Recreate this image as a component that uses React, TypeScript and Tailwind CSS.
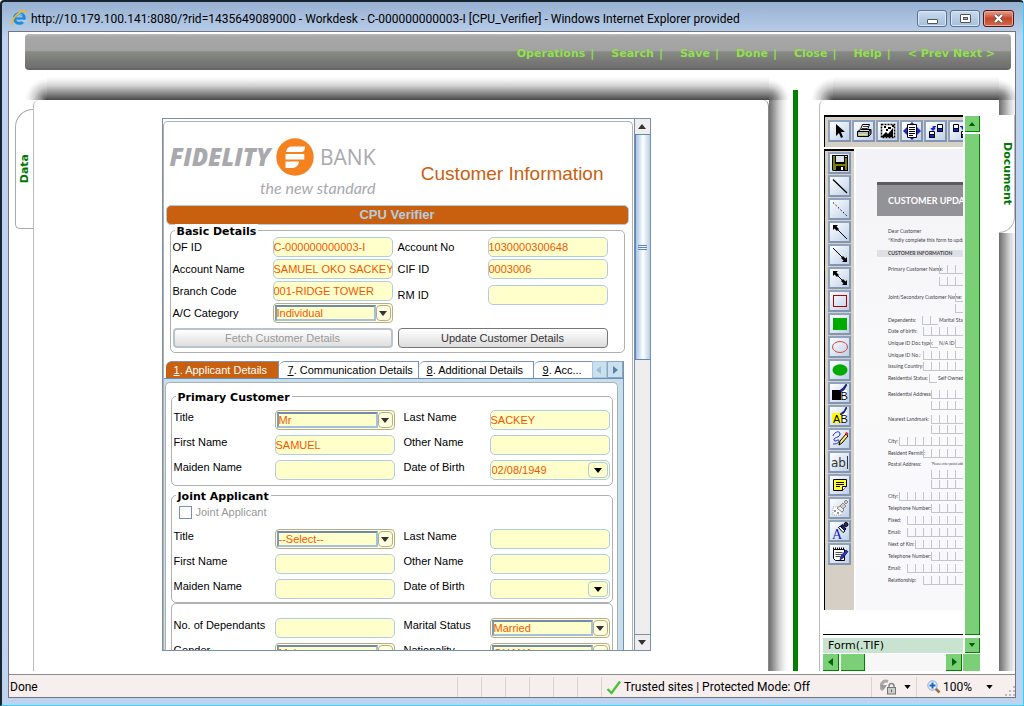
import React from "react";

const VERDANA = "font-['DejaVu_Sans',sans-serif]";

/* ---------- small glyphs ---------- */

function Tri({ dir, className }: { dir: "up" | "down" | "left" | "right"; className?: string }) {
  const pts = {
    up: "0,5 4,0 8,5",
    down: "0,0 8,0 4,5",
    left: "6,0 6,8 1,4",
    right: "2,0 2,8 7,4",
  }[dir];
  return (
    <svg viewBox={dir === "up" || dir === "down" ? "0 0 8 5" : "0 0 8 8"} className={className ?? "h-[5px] w-2"} fill="currentColor" aria-hidden="true">
      <polygon points={pts} />
    </svg>
  );
}

function IeLogo() {
  return (
    <svg viewBox="0 0 16 16" className="h-4 w-4 shrink-0" aria-hidden="true">
      <circle cx="8.4" cy="8.4" r="4.9" fill="none" stroke="#1c8be0" strokeWidth="3" />
      <rect x="5" y="7.4" width="9" height="2.2" fill="#1c8be0" />
      <path d="M10 9.8h6v2.6h-4z" fill="#b5cce7" />
      <path d="M5.5 5.4c1.5-2 4.6-2 5.8 0" fill="none" stroke="#8fdcff" strokeWidth="1" />
      <path d="M1.5 15.2C-.8 12.5 4 5 9 2.2c3-1.7 6-2 5.8.6" fill="none" stroke="#f2b81c" strokeWidth="1.7" />
    </svg>
  );
}

/* ---------- form controls ---------- */

function TextField({ label, value = "" }: { label: string; value?: string }) {
  return (
    <input
      aria-label={label}
      defaultValue={value}
      className="h-5 w-[120px] rounded-[5px] border border-[#b0cbe6] bg-[#ffffcc] text-[11px] leading-4 text-[#f05800] outline-none"
    />
  );
}

function SelectField({ label, value }: { label: string; value: string }) {
  return (
    <div className="flex h-5 w-[120px] items-stretch rounded-[4px] border border-[#b4af88] bg-[#ffffe0] p-px">
      <select
        aria-label={label}
        defaultValue={value}
        className="min-w-0 flex-1 appearance-none border-2 border-[#a3c0de] border-t-[#7189ab] border-l-[#7d9abd] bg-[#ffffcc] text-[11px] leading-3 text-[#f05800] outline-none"
      >
        <option>{value}</option>
      </select>
      <span className="pointer-events-none flex w-[15px] items-center justify-center rounded-[4px] border border-[#b4af88] bg-[#ffffdd] text-[#333]">
        <Tri dir="down" className="h-[5px] w-[10px]" />
      </span>
    </div>
  );
}

function DateField({ label, value = "" }: { label: string; value?: string }) {
  return (
    <div className="flex h-5 w-[120px] items-center rounded-[5px] border border-[#b0cbe6] bg-[#ffffcc] pr-px">
      <input aria-label={label} defaultValue={value} className="min-w-0 flex-1 bg-transparent px-px text-[11px] leading-4 text-[#f05800] outline-none" />
      <button aria-label={"Pick " + label} className="flex h-4 w-5 items-center justify-center rounded-[4px] border border-[#b0cbe6] text-black">
        <Tri dir="down" className="h-[7px] w-2" />
      </button>
    </div>
  );
}

type Cell = { label: string; kind?: "text" | "select" | "date"; value?: string };

function Control({ cell }: { cell: Cell }) {
  if (cell.kind === "select") return <SelectField label={cell.label} value={cell.value ?? ""} />;
  if (cell.kind === "date") return <DateField label={cell.label} value={cell.value} />;
  return <TextField label={cell.label} value={cell.value} />;
}

function FieldRows({ rows }: { rows: [Cell, Cell][] }) {
  return (
    <div className="grid gap-y-[5px]">
      {rows.map(([a, b], i) => (
        <div key={i} className="grid grid-cols-[101px_129px_86px_120px] text-[11px] leading-[14px]">
          <span>{a.label}</span>
          <Control cell={a} />
          <span>{b.label}</span>
          <Control cell={b} />
        </div>
      ))}
    </div>
  );
}

function Group({ title, className, children }: { title: string; className: string; children: React.ReactNode }) {
  return (
    <section className={"relative rounded-[5px] border border-[#b0b0b0] " + className}>
      <h2 className={"absolute -top-[7px] left-1 bg-white px-[2px] text-[11px] leading-4 font-bold " + VERDANA}>{title}</h2>
      {children}
    </section>
  );
}

/* ---------- bank form ---------- */

function BankLogo() {
  return (
    <div className="w-[206px] text-[#a9a9ad]">
      <div className="flex items-center justify-between font-['Open_Sans',sans-serif] text-[22px] leading-[38px]">
        <span className="text-[24px] font-extrabold italic">FIDELITY</span>
        <svg viewBox="0 0 38 38" className="h-[38px] w-[38px]" aria-hidden="true">
          <circle cx="19" cy="19" r="18.7" fill="#f5821f" />
          <path d="M14.5 8.5H29c0 4-1.5 5.500-4 5.500H10c.5-3 2-5 4.500-5.500z" fill="#fff" />
          <path d="M9.500 16h18.800v5.500H9.500z" fill="#fff" />
          <path d="M9.500 23.500H23c-.5 4-3 6.500-7 6.500H9.500z" fill="#fff" />
        </svg>
        <span className="text-[21px] font-normal">BANK</span>
      </div>
      <div className="text-right font-['Lato',sans-serif] text-[16px] leading-6 italic">the new standard</div>
    </div>
  );
}

function BasicDetails() {
  const left: Cell[] = [
    { label: "OF ID", value: "C-000000000003-I" },
    { label: "Account Name", value: "SAMUEL OKO SACKEY" },
    { label: "Branch Code", value: "001-RIDGE TOWER" },
    { label: "A/C Category", kind: "select", value: "Individual" },
  ];
  const right: Cell[] = [
    { label: "Account No", value: "1030000300648" },
    { label: "CIF ID", value: "0003006" },
    { label: "RM ID" },
  ];
  return (
    <Group title="Basic Details" className="mt-[5px] mr-[7px] ml-[6px] px-[2px] pt-[6px] pb-1">
      <div className="grid grid-cols-[220px_210px] gap-x-[5px] text-[11px] leading-4">
        <div className="grid gap-y-[2px]">
          {left.map((c) => (
            <div key={c.label} className="flex items-center justify-between">
              <span>{c.label}</span>
              <Control cell={c} />
            </div>
          ))}
        </div>
        <div className="grid grid-rows-[20px_20px_28px] content-start gap-y-[2px]">
          {right.map((c) => (
            <div key={c.label} className="flex items-center justify-between">
              <span>{c.label}</span>
              <Control cell={c} />
            </div>
          ))}
        </div>
        <button disabled className="mt-[5px] h-5 rounded-[4px] border-2 border-[#b9c3cc] bg-linear-to-b from-white to-[#dedede] text-[11px] leading-4 text-[#999]">
          Fetch Customer Details
        </button>
        <button className="mt-[5px] h-5 rounded-[4px] border border-[#777] bg-linear-to-b from-white to-[#dcdcdc] text-[11px] leading-4 text-[#333]">
          Update Customer Details
        </button>
      </div>
    </Group>
  );
}

function FormTabs() {
  const tabs = [
    ["1", ". Applicant Details", "w-[113px] bg-[#c8600f] text-white pl-2"],
    ["7", ". Communication Details", "w-[140px] bg-white pl-[9px]"],
    ["8", ". Additional Details", "w-[115px] bg-white pl-2"],
    ["9", ". Acc...", "w-[58px] bg-white pl-[9px] border-r-0"],
  ];
  return (
    <div role="tablist" className="flex h-[18px] border-b border-[#6d8db5] pl-[2px]">
      {tabs.map(([n, rest, cls]) => (
        <button
          key={n}
          role="tab"
          aria-selected={n === "1"}
          className={"shrink-0 rounded-tl-[6px] border-t border-r border-[#7a94b8] text-left text-[11px] leading-[15px] whitespace-nowrap " + cls}
        >
          <span className="underline">{n}</span>
          {rest}
        </button>
      ))}
      <button aria-label="Scroll tabs left" className="flex w-4 items-center justify-center border border-[#a8c4dc] bg-[#c9e0ee] text-[#9dbdd8]">
        <Tri dir="left" className="h-2 w-2" />
      </button>
      <button aria-label="Scroll tabs right" className="flex w-4 items-center justify-center border border-[#8aa8c4] bg-[#c9e0ee] text-[#5a7fa8]">
        <Tri dir="right" className="h-2 w-2" />
      </button>
    </div>
  );
}

function BankForm() {
  return (
    <div className="flex min-h-0 flex-1 self-stretch overflow-hidden">
      <div className="mt-[2px] min-w-0 flex-1 rounded-t-[5px] border border-b-0 border-[#b0b0b0]">
        <div className="flex h-[83px] items-start justify-between pt-4 pr-7 pl-[6px]">
          <BankLogo />
          <h1 className="pt-5 text-[19px] leading-8 text-[#c8600f]">Customer Information</h1>
        </div>
        <div className="mr-[3px] ml-[2px] h-5 rounded-[5px] border border-[#b0cbe6] bg-[#c8600f] text-center text-[13px] leading-[18px] font-bold text-[#b5cce0]">
          CPU Verifier
        </div>
        <BasicDetails />
        <div className="mt-2 mr-2 border-r border-[#7a8fa8]">
          <FormTabs />
          <div className="bg-[#c6dfed] pt-[3px] pr-[5px] pl-px">
            <div className="rounded-t-[5px] border border-b-0 border-[#b0b0b0] bg-white pt-[13px] pr-1 pl-[5px]">
              <Group title="Primary Customer" className="px-[2px] pt-[13px] pb-[5px]">
                <FieldRows
                  rows={[
                    [{ label: "Title", kind: "select", value: "Mr" }, { label: "Last Name", value: "SACKEY" }],
                    [{ label: "First Name", value: "SAMUEL" }, { label: "Other Name" }],
                    [{ label: "Maiden Name" }, { label: "Date of Birth", kind: "date", value: "02/08/1949" }],
                  ]}
                />
              </Group>
              <Group title="Joint Applicant" className="mt-[9px] px-[2px] pt-[7px] pb-[3px]">
                <label className="mb-2 ml-[5px] flex h-[18px] items-center gap-1 text-[11px] leading-4 text-[#999]">
                  <input type="checkbox" className="h-[13px] w-[13px] appearance-none border border-[#7a8fb4] bg-white" />
                  Joint Applicant
                </label>
                <FieldRows
                  rows={[
                    [{ label: "Title", kind: "select", value: "--Select--" }, { label: "Last Name" }],
                    [{ label: "First Name" }, { label: "Other Name" }],
                    [{ label: "Maiden Name" }, { label: "Date of Birth", kind: "date" }],
                  ]}
                />
              </Group>
              <section className="rounded-[5px] border border-[#b0b0b0] px-[2px] pt-[14px] pb-8">
                <FieldRows
                  rows={[
                    [{ label: "No. of Dependants" }, { label: "Marital Status", kind: "select", value: "Married" }],
                    [{ label: "Gender", kind: "select", value: "Male" }, { label: "Nationality", kind: "select", value: "GHANA" }],
                  ]}
                />
              </section>
            </div>
          </div>
        </div>
      </div>
    </div>
  );
}

function FormWindow() {
  return (
    <div className="mx-auto flex h-full w-[489px] border border-[#7a8fa8] font-['Liberation_Sans',Arial,sans-serif] text-black">
      <BankForm />
      <div className="ml-px flex w-4 flex-col border-l border-[#7a8fa8] bg-[#eee]">
        <button aria-label="Scroll up" className="flex h-[15px] items-center justify-center text-[#333]">
          <Tri dir="up" />
        </button>
        <div className="flex h-[226px] flex-col items-center justify-center gap-px border border-r-0 border-[#5f86bd] bg-linear-to-r from-[#a9c5e6] via-white to-[#b5cfe5]">
          <i className="h-px w-[9px] bg-[#5f86bd]" />
          <i className="h-px w-[9px] bg-[#5f86bd]" />
          <i className="h-px w-[9px] bg-[#5f86bd]" />
        </div>
        <button aria-label="Scroll down" className="mt-auto flex h-4 items-center justify-center border-t border-[#7a8fa8] text-[#333]">
          <Tri dir="down" />
        </button>
      </div>
    </div>
  );
}

/* ---------- document viewer ---------- */

const arrowHead = <path d="M1 1h5L4.500 2.500 7 5 5 7 2.500 4.500 1 6z" />;

const topTools: [string, React.ReactNode][] = [
  ["Pointer", <path key="i" d="M4 1v12l3-3 2 5 2-1-2-5h4z" />],
  [
    "Print",
    <g key="i" stroke="#000" fill="#fff">
      <path d="M4.500 6.500l2-5h7l-2 5" />
      <path d="M7 3.500h5M6 5.500h5" strokeWidth=".8" />
      <path d="M1.500 8.500l3-2h10l-2 2z" fill="#ddd" />
      <path d="M1.500 8.500h11v5h-11z" fill="#bbb" />
      <path d="M12.500 8.500l2.500-2v4.500l-2.500 2.500z" fill="#777" />
      <path d="M3 11.500h7" stroke="#ee4" />
    </g>,
  ],
  [
    "Select zone",
    <g key="i">
      <path d="M1.500 1.500h13v13h-13z" fill="#fff" stroke="#000" strokeWidth="1.500" strokeDasharray="2 1" />
      <path d="M2 13l4-4 2 2 5-6v9H2z" />
      <path d="M4 3h2v2H4zM8 4h3v2H8zM12 2h2v2h-2zM6 6h2v2H6z" />
    </g>,
  ],
  [
    "Fit page",
    <g key="i">
      <path d="M8 -1l3 3H5zM8 17l3-3H5zM-1 8l4-4v8zM17 8l-4-4v8z" fill="#22c" />
      <path d="M3.500 1.500h9v13h-9z" fill="#fff" stroke="#000" />
      <path d="M5 4.500h6M5 6.500h6M5 8.500h6M5 10.500h6M5 12.500h4" stroke="#000" fill="none" />
    </g>,
  ],
  [
    "Rotate left",
    <g key="i" stroke="#000" fill="#fff">
      <path d="M9.500 1.500h5v7h-5zM1.500 8.500h5v6h-5z" />
      <path d="M9.500 5.500h5v3h-5zM1.500 11.500h5v3h-5z" fill="#12d" />
      <path d="M8 3.500H5v3M3 5.500h4L5 7.500z" fill="#12d" stroke="#12d" />
    </g>,
  ],
  [
    "Rotate right",
    <g key="i" stroke="#000" fill="#fff">
      <path d="M1.500 1.500h5v7h-5zM9.500 8.500h5v6h-5z" />
      <path d="M1.500 5.500h5v3h-5zM9.500 11.500h5v3h-5z" fill="#12d" />
      <path d="M8 3.500h4v3M10 5.500h4l-2 2z" fill="#12d" stroke="#12d" />
    </g>,
  ],
];

const toolLetter = "font-['Liberation_Sans',sans-serif] text-[11px]";

const sideTools: [string, React.ReactNode][] = [
  [
    "Save",
    <g key="i">
      <path d="M0 0h16v16H1l-1-1z" />
      <path d="M1 1h2v8h10V3h2v12h-2v-4H4v4H1z" fill="#808000" />
      <path d="M4 1h8v6H4z" fill="#dde6f0" />
      <path d="M9 12h2v3H9z" fill="#fff" />
      <path d="M13 1h2v1h-2z" fill="#ddd" />
    </g>,
  ],
  ["Line", <path key="i" d="M1 1.500L15 15" stroke="#000" strokeWidth="1.300" />],
  ["Dotted line", <path key="i" d="M1 1.500L15 15" stroke="#000" strokeDasharray="1.500 2" />],
  [
    "Arrow start",
    <g key="i">
      {arrowHead}
      <path d="M3 3l12 12" stroke="#000" />
    </g>,
  ],
  [
    "Arrow end",
    <g key="i">
      <g transform="rotate(180 8 8)">{arrowHead}</g>
      <path d="M1 1l12 12" stroke="#000" />
    </g>,
  ],
  [
    "Double arrow",
    <g key="i">
      {arrowHead}
      <g transform="rotate(180 8 8)">{arrowHead}</g>
      <path d="M3 3l10 10" stroke="#000" />
    </g>,
  ],
  ["Rectangle", <rect key="i" x="1.500" y="2.500" width="13" height="11" fill="none" stroke="#b00000" />],
  ["Filled rectangle", <rect key="i" x="1" y="2" width="14" height="12" fill="#0a0" />],
  ["Ellipse", <ellipse key="i" cx="8" cy="8" rx="7.500" ry="5.500" fill="none" stroke="#d04848" />],
  ["Filled ellipse", <ellipse key="i" cx="8" cy="8" rx="7.500" ry="5.800" fill="#0a0" />],
  [
    "Black out",
    <g key="i">
      <path d="M0 5h9v10H0z" />
      <path d="M9 5h6v10H9z" fill="#fff" />
      <path d="M7 6l4-3 3-4 1 1-3 5-3 2z" fill="#12b" stroke="#000" strokeWidth=".5" />
      <text x="8.500" y="14.500" className={toolLetter}>B</text>
    </g>,
  ],
  [
    "Highlight",
    <g key="i">
      <path d="M0 5h9v10H0z" fill="#ff0" />
      <path d="M9 5h6v10H9z" fill="#fff" />
      <path d="M8 6l4-3 2-4 1 1-3 5-3 2z" fill="#12b" stroke="#000" strokeWidth=".5" />
      <text x="1" y="14.500" className={toolLetter}>A</text>
      <text x="8.500" y="14.500" className={toolLetter}>B</text>
    </g>,
  ],
  [
    "Freehand",
    <g key="i" fill="none">
      <path d="M1 5C2 1 8-1 8 3S1 6 2 9s5-2 5 1-5 3-6 3" stroke="#22c" />
      <path d="M7 14l1-4 6-7 2 2-6 7z" fill="#fe6" stroke="#000" />
      <path d="M13 2l2-1 1.500 2-1.500 2z" fill="#d22" />
    </g>,
  ],
  [
    "Text",
    <g key="i">
      <text x="-1" y="13" className="fill-[#333] font-['DejaVu_Sans',sans-serif] text-[12px]">ab</text>
      <path d="M15.500 2v13" stroke="#333" />
    </g>,
  ],
  [
    "Sticky note",
    <g key="i" stroke="#000">
      <path d="M1.500 2.500h13v7l-4 4h-9z" fill="#ff3" />
      <path d="M10.500 13.500v-4h4" fill="#fff" />
      <path d="M4 5.500h8M4 7.500h8M4 9.500h4" />
    </g>,
  ],
  [
    "Stamp picture",
    <g key="i" fill="#999">
      <path d="M1 7h9v8H1z" fill="#fff" stroke="#aaa" strokeDasharray="1 1" />
      <path d="M5 8l3-2 4 4-2 2z" fill="#eee" stroke="#888" />
      <path d="M8 6l3-3 3 3-3 3zM12 2l2-2 2 2-2 2z" stroke="#888" fill="#ccc" />
      <path d="M2 10h2v2H2zM5 12h2v2H5z" />
    </g>,
  ],
  [
    "Stamp text",
    <g key="i">
      <text x="0" y="16" className="fill-[#12b] font-['Liberation_Serif',serif] text-[14px]">A</text>
      <path d="M6.500 4.500l2-1.500 4.500 5-2 1.500z" fill="#fff" stroke="#000" />
      <path d="M8.500 3l2-1.500L14 6l-1.500 1.500z" fill="#12b" stroke="#000" />
      <circle cx="14" cy="1.500" r="2" fill="#335" stroke="#000" />
    </g>,
  ],
  [
    "Notes",
    <g key="i" stroke="#000">
      <path d="M1.500 3.500h11v11h-9l-2-2z" fill="#fff" />
      <path d="M1 2.500h12" strokeDasharray="1 1" strokeWidth="2" />
      <path d="M3.500 6.500h7M3.500 8.500h7M3.500 10.500h5" strokeWidth=".7" />
      <path d="M8 14l1-4 5-6 2 1.500-5 6.500z" fill="#23c" stroke="#113" strokeWidth=".7" />
    </g>,
  ],
];

function ToolButton({ name, children }: { name: string; children: React.ReactNode }) {
  return (
    <button
      aria-label={name}
      className="flex h-[22px] w-[23px] shrink-0 items-center justify-center border-2 border-[#8296b3] border-t-[#8fa3be] border-l-[#8fa3be] bg-linear-to-br from-white to-[#bfd0e8]"
    >
      <svg viewBox="0 0 16 16" className="h-4 w-4 overflow-visible" aria-hidden="true">
        {children}
      </svg>
    </button>
  );
}

type ScanRow = { t?: string; h?: string; n?: number; mid?: [number, string, string]; note?: string };

const scanRows: ScanRow[] = [
  { t: "Primary Customer Name:", n: 3 },
  { n: 3 },
  { t: "Joint/Secondary Customer Name:", h: "h-4", n: 1 },
  { n: 1, h: "h-[11px]" },
  { t: "Dependents:", mid: [2, "Marital Sta", "w-[41px]"] },
  { t: "Date of birth:", n: 5, h: "h-[11px]" },
  { t: "Unique ID Doc type:", mid: [1, "N/A ID", "w-[25px]"], n: 1 },
  { t: "Unique ID No.:", n: 5 },
  { t: "Issuing Country:", n: 5, h: "h-[11px]" },
  { t: "Residential Status:", mid: [1, "Self Owned", "w-[34px]"] },
  { t: "Residential Address:", n: 4, h: "h-4" },
  { n: 4, h: "h-[11px]" },
  { t: "Nearest Landmark:", n: 4, h: "h-[14px]" },
  { n: 4, h: "h-[10px]" },
  { t: "City:", n: 8 },
  { t: "Resident Permit :", n: 5 },
  { t: "Postal Address:", note: "*Please enter postal address", h: "h-[11px]" },
  { n: 4, h: "h-[10px]" },
  { n: 4, h: "h-[10px]" },
  { t: "City:", n: 8 },
  { t: "Telephone Number:", n: 4 },
  { t: "Fixed:", n: 7 },
  { t: "Email:", n: 7 },
  { t: "Next of Kin:", n: 6 },
  { t: "Telephone Number:", n: 4 },
  { t: "Email:", n: 7 },
  { t: "Relationship:", n: 5 },
];

function Boxes({ n }: { n: number }) {
  return (
    <span className="flex h-[9px] shrink-0">
      {Array.from({ length: n }, (_, i) => (
        <i key={i} className="w-2 border-b border-l border-[#c4c4cc]" />
      ))}
    </span>
  );
}

function Scan() {
  return (
    <div className="min-w-0 flex-1 overflow-hidden bg-linear-to-b from-[#f3f2f6] via-[#fafafb] to-[#f8f7fa] pt-[33px] pl-[21px] font-['Lato',sans-serif] text-[5px] whitespace-nowrap text-[#44444c]">
      <div className="h-[34px] border-t-[3px] border-[#5c5c60] bg-[#929297] pl-[11px] text-[9px] leading-[32px] font-bold text-white">CUSTOMER UPDA</div>
      <div className="pt-[11px] pl-[11px]">
        <p className="leading-[9px]">Dear Customer</p>
        <p className="leading-[9px]">*Kindly complete this form to update</p>
      </div>
      <p className="mt-[5px] h-[7px] bg-[#e0e0e4] pl-[11px] leading-[7px] font-bold">CUSTOMER INFORMATION</p>
      <div className="pt-[5px] pl-[11px]">
        {scanRows.map((r, i) => (
          <div key={i} className={"flex items-end leading-[9px] " + (r.h ?? "h-3")}>
            <span className="min-w-0 flex-1">{r.t}</span>
            {r.mid && (
              <span className={"flex shrink-0 gap-px " + r.mid[2]}>
                <Boxes n={r.mid[0]} />
                {r.mid[1]}
              </span>
            )}
            {r.note && <span className="w-8 text-[3px]">{r.note}</span>}
            {r.n && <Boxes n={r.n} />}
          </div>
        ))}
      </div>
    </div>
  );
}

function GreenArrow({ dir, label, className }: { dir: "up" | "down" | "left" | "right"; label: string; className: string }) {
  return (
    <button aria-label={label} className={"flex shrink-0 items-center justify-center border-r border-b border-[#008000] bg-[#7bd077] text-[#006400] " + className}>
      <Tri dir={dir} className={dir === "up" || dir === "down" ? "h-1 w-2" : "h-2 w-2"} />
    </button>
  );
}

function Viewer() {
  return (
    <div className="flex h-full flex-col">
      <div className="flex min-h-0 flex-1">
        <div className="flex min-w-0 flex-1 flex-col border-b border-black pl-px">
          <div className="flex h-[32px] gap-px overflow-hidden border-t-2 border-l border-black bg-[#d6cfc6] pt-[3px] pl-[3px]">
            {topTools.map(([name, icon]) => (
              <ToolButton key={name} name={name}>{icon}</ToolButton>
            ))}
          </div>
          <div className="mt-[2px] mb-6 flex min-h-0 flex-1 overflow-hidden">
            <div className="mr-[2px] flex w-[30px] shrink-0 flex-col gap-px border-t-2 border-l border-black bg-[#d6cfc6] pt-px pl-[3px]">
              {sideTools.map(([name, icon]) => (
                <ToolButton key={name} name={name}>{icon}</ToolButton>
              ))}
            </div>
            <Scan />
          </div>
        </div>
        <div className="ml-[2px] flex w-[15px] flex-col pt-px">
          <GreenArrow dir="up" label="Scroll document up" className="h-4 w-full" />
          <div className="mt-[2px] flex-1 border-r border-b border-[#008000] bg-[#7bd077]" />
        </div>
      </div>
      <div className="mt-[3px] flex h-[15px]">
        <select aria-label="Document" className={"min-w-0 flex-1 appearance-none bg-[#c8e4d0] px-[5px] text-[11px] leading-[13px] text-black outline-none " + VERDANA}>
          <option>Form(.TIF)</option>
        </select>
        <GreenArrow dir="down" label="Open document list" className="ml-[2px] w-[15px]" />
      </div>
      <div className="mt-px flex h-[17px]">
        <GreenArrow dir="left" label="Scroll document left" className="w-4" />
        <div className="flex-1 bg-[#f7f7f7] pl-[2px]">
          <div className="h-full w-6 border-r border-b border-[#008000] bg-[#7bd077]" />
        </div>
        <GreenArrow dir="right" label="Scroll document right" className="w-4" />
        <div className="ml-px w-[17px] bg-[#7bd077]" />
      </div>
    </div>
  );
}

/* ---------- page frame ---------- */

function TopShade() {
  return (
    <div className="-ml-2 flex h-[25px] shrink-0">
      <div className="w-[22px] bg-[radial-gradient(circle_at_bottom_right,#484848_0px,#8c8c8c_6px,#cfcfcf_13px,#f4f4f4_19px,#fff_22px)]" />
      <div className="flex-1 bg-[linear-gradient(to_top,#484848_0px,#8c8c8c_7px,#cfcfcf_14px,#f4f4f4_20px,#fff_24px)]" />
    </div>
  );
}

const cornerShade = "h-[25px] shrink-0 bg-[radial-gradient(circle_at_bottom_left,#585858_0px,#8c8c8c_7px,#cfcfcf_13px,#f4f4f4_18px,#fff_21px)]";
const sideShade = "flex-1 bg-[linear-gradient(to_right,#6e6e6e_0px,#9c9c9c_5px,#cfcfcf_10px,#f0f0f0_15px,#fff_19px)]";

function MenuBar() {
  const items = ["Operations", "Search", "Save", "Done", "Close", "Help"];
  return (
    <nav className={"mt-[2px] mr-1 mb-px ml-4 flex h-9 shrink-0 items-center justify-end gap-[17px] rounded-[4px] border-b-2 border-[#666] bg-[linear-gradient(#bbb_0px,#a6a6a6_3px,#a2a2a2_50%,#878a84_52%,#6e6e6e_100%)] pt-[5px] pr-4 text-[11px] leading-4 font-bold text-[#92e04c] " + VERDANA}>
      {items.map((t) => (
        <a key={t} href="#" className="flex gap-[5px]">
          {t} <span>|</span>
        </a>
      ))}
      <span className="flex gap-1">
        <a href="#">&lt; Prev</a>
        <a href="#">Next &gt;</a>
      </span>
    </nav>
  );
}

function TitleBar() {
  return (
    <header className="flex h-[29px] shrink-0 items-start gap-1 pt-2 pl-[9px] text-black">
      <IeLogo />
      <span className="flex-1 truncate pt-px font-['Roboto',sans-serif] text-[12px] leading-4">
        http://10.179.100.141:8080/?rid=1435649089000 - Workdesk - C-000000000003-I [CPU_Verifier] - Windows Internet Explorer provided
      </span>
      <div className="flex gap-[3px] pr-[9px]">
        <button aria-label="Minimize" className="flex h-[17px] w-[30px] items-center justify-center rounded-[3px] border border-[#5a6f8e] bg-linear-to-b from-[#c9dbee] to-[#a5bedb] shadow-[inset_0_0_0_1px_#dce9f6]">
          <i className="mt-[5px] h-[5px] w-[11px] rounded-[1px] border border-[#555] bg-white" />
        </button>
        <button aria-label="Restore" className="flex h-[17px] w-[30px] items-center justify-center rounded-[3px] border border-[#5a6f8e] bg-linear-to-b from-[#c9dbee] to-[#a5bedb] shadow-[inset_0_0_0_1px_#dce9f6]">
          <i className="flex h-[9px] w-[11px] items-center justify-center rounded-[1px] border border-[#555] bg-white">
            <i className="h-[3px] w-[5px] border border-[#555] bg-[#9bb6d8]" />
          </i>
        </button>
        <button aria-label="Close window" className="flex h-[17px] w-[31px] items-center justify-center rounded-[3px] border border-[#4f1515] bg-linear-to-b from-[#e8a090] via-[#c4452b] to-[#cf6a4c] shadow-[inset_0_0_0_1px_#eba99b]">
          <svg viewBox="0 0 11 9" className="h-[9px] w-[11px]" aria-hidden="true">
            <path d="M2 1l7 7M9 1L2 8" stroke="#555" strokeWidth="3.600" />
            <path d="M2 1l7 7M9 1L2 8" stroke="#fff" strokeWidth="2.200" />
          </svg>
        </button>
      </div>
    </header>
  );
}

function StatusBar() {
  return (
    <footer className="flex h-[23px] shrink-0 items-center border-t border-[#8c8c8c] bg-[#f7eeee] pt-[2px] pl-px font-['Roboto',sans-serif] text-[12px] leading-4 text-black">
      <span className="flex-1">Done</span>
      <div className="flex self-stretch">
        {[0, 1, 2, 3, 4, 5].map((i) => (
          <i key={i} className="w-6 border-l border-[#dcd2d2]" />
        ))}
      </div>
      <div className="flex w-[270px] items-center gap-[3px] self-stretch border-l border-[#dcd2d2] pl-1">
        <svg viewBox="0 0 15 15" className="h-[15px] w-[15px]" aria-hidden="true">
          <path d="M1.500 9l4 4L14 1.500" fill="none" stroke="#4cc23c" strokeWidth="2.400" />
        </svg>
        Trusted sites | Protected Mode: Off
      </div>
      <div className="flex w-[45px] items-center gap-2 self-stretch border-l border-[#dcd2d2] pl-2">
        <svg viewBox="0 0 16 16" className="h-4 w-4" aria-hidden="true">
          <path d="M3 11A5 5 0 018 2.500" fill="none" stroke="#aaa" strokeWidth="3" />
          <path d="M0 6h7l-3.500 5z" fill="#999" />
          <path d="M9 9V7a2.500 2.500 0 015 0v2" fill="none" stroke="#888" strokeWidth="1.500" />
          <rect x="7.500" y="8.500" width="8" height="6.500" fill="#ccc" stroke="#777" />
          <path d="M11.500 10.500v2.500" stroke="#666" />
        </svg>
        <Tri dir="down" className="h-1 w-[7px]" />
      </div>
      <div className="flex w-[99px] items-center self-stretch border-l border-[#dcd2d2] pl-[10px]">
        <svg viewBox="0 0 14 14" className="mr-[2px] h-[14px] w-[14px]" aria-hidden="true">
          <path d="M8.500 8.500l4 4" stroke="#a06a3c" strokeWidth="2.500" />
          <circle cx="5.500" cy="5.500" r="4.700" fill="#e4f2ff" stroke="#85a9cd" />
          <path d="M5.500 2.500v6M2.500 5.500h6" stroke="#1766cc" strokeWidth="2" />
        </svg>
        <button className="flex flex-1 items-center justify-between">
          100% <Tri dir="down" className="h-1 w-[7px]" />
        </button>
        <svg viewBox="0 0 10 10" className="mt-2 ml-3 h-[10px] w-[10px]" fill="#bbb" aria-hidden="true">
          <path d="M8 0h2v2H8zM8 4h2v2H8zM8 8h2v2H8zM4 4h2v2H4zM4 8h2v2H4zM0 8h2v2H0z" />
        </svg>
      </div>
    </footer>
  );
}

export default function App() {
  return (
    <div className="flex h-screen min-h-[500px] flex-col overflow-hidden rounded-t-[4px] border-t-2 border-r border-b border-l-2 border-t-[#182430] border-r-[#2cd3f5] border-b-[#2cd3f5] border-l-[#182430] bg-linear-to-b from-[#98b0d0] via-[#bcd2ee] via-5% to-[#bdd3f0]">
      <TitleBar />
      <div className="mr-[7px] mb-[7px] ml-[6px] flex min-h-0 flex-1 flex-col border border-[#75757a] bg-white">
        <MenuBar />
        <main className="flex min-h-0 flex-1 pb-[3px] pl-[6px]">
          <button className={"mt-[38px] h-[120px] w-[18px] shrink-0 rounded-tl-[18px] rounded-bl-[5px] border border-r-0 border-[#aaa] pl-px text-[11px] font-bold text-[#007800] [writing-mode:vertical-rl] " + VERDANA}>
            <span className="inline-block rotate-180">Data</span>
          </button>
          <div className="flex min-w-0 flex-1 flex-col pt-1">
            <TopShade />
            <div className="min-h-0 flex-1 rounded-t-[6px] border-r border-l border-r-[#888] border-l-[#bbb] pt-[18px] pb-5 pl-[10px]">
              <FormWindow />
            </div>
          </div>
          <div className="flex w-5 shrink-0 flex-col pt-1">
            <div className={cornerShade} />
            <div className={sideShade} />
          </div>
          <div className="mt-[19px] ml-1 w-[5px] shrink-0 bg-[#008000]" />
          <div className="ml-[21px] flex w-[180px] shrink-0 flex-col pt-1">
            <TopShade />
            <div className="min-h-0 flex-1 rounded-t-[6px] border-l border-[#bbb] pt-[15px] pr-[19px] pl-[3px]">
              <Viewer />
            </div>
          </div>
          <div className="flex w-4 shrink-0 flex-col pt-1">
            <div className={cornerShade} />
            <div className="h-[15px] bg-[linear-gradient(to_right,#6e6e6e_0px,#9c9c9c_5px,#cfcfcf_10px,#f0f0f0_15px)]" />
            <button className={"flex h-[118px] items-center justify-center rounded-br-[18px] border-r border-b border-[#bbb] text-[11px] leading-4 font-bold text-[#007800] [writing-mode:vertical-rl] " + VERDANA}>
              Document
            </button>
            <div className={sideShade} />
          </div>
        </main>
        <StatusBar />
      </div>
    </div>
  );
}
